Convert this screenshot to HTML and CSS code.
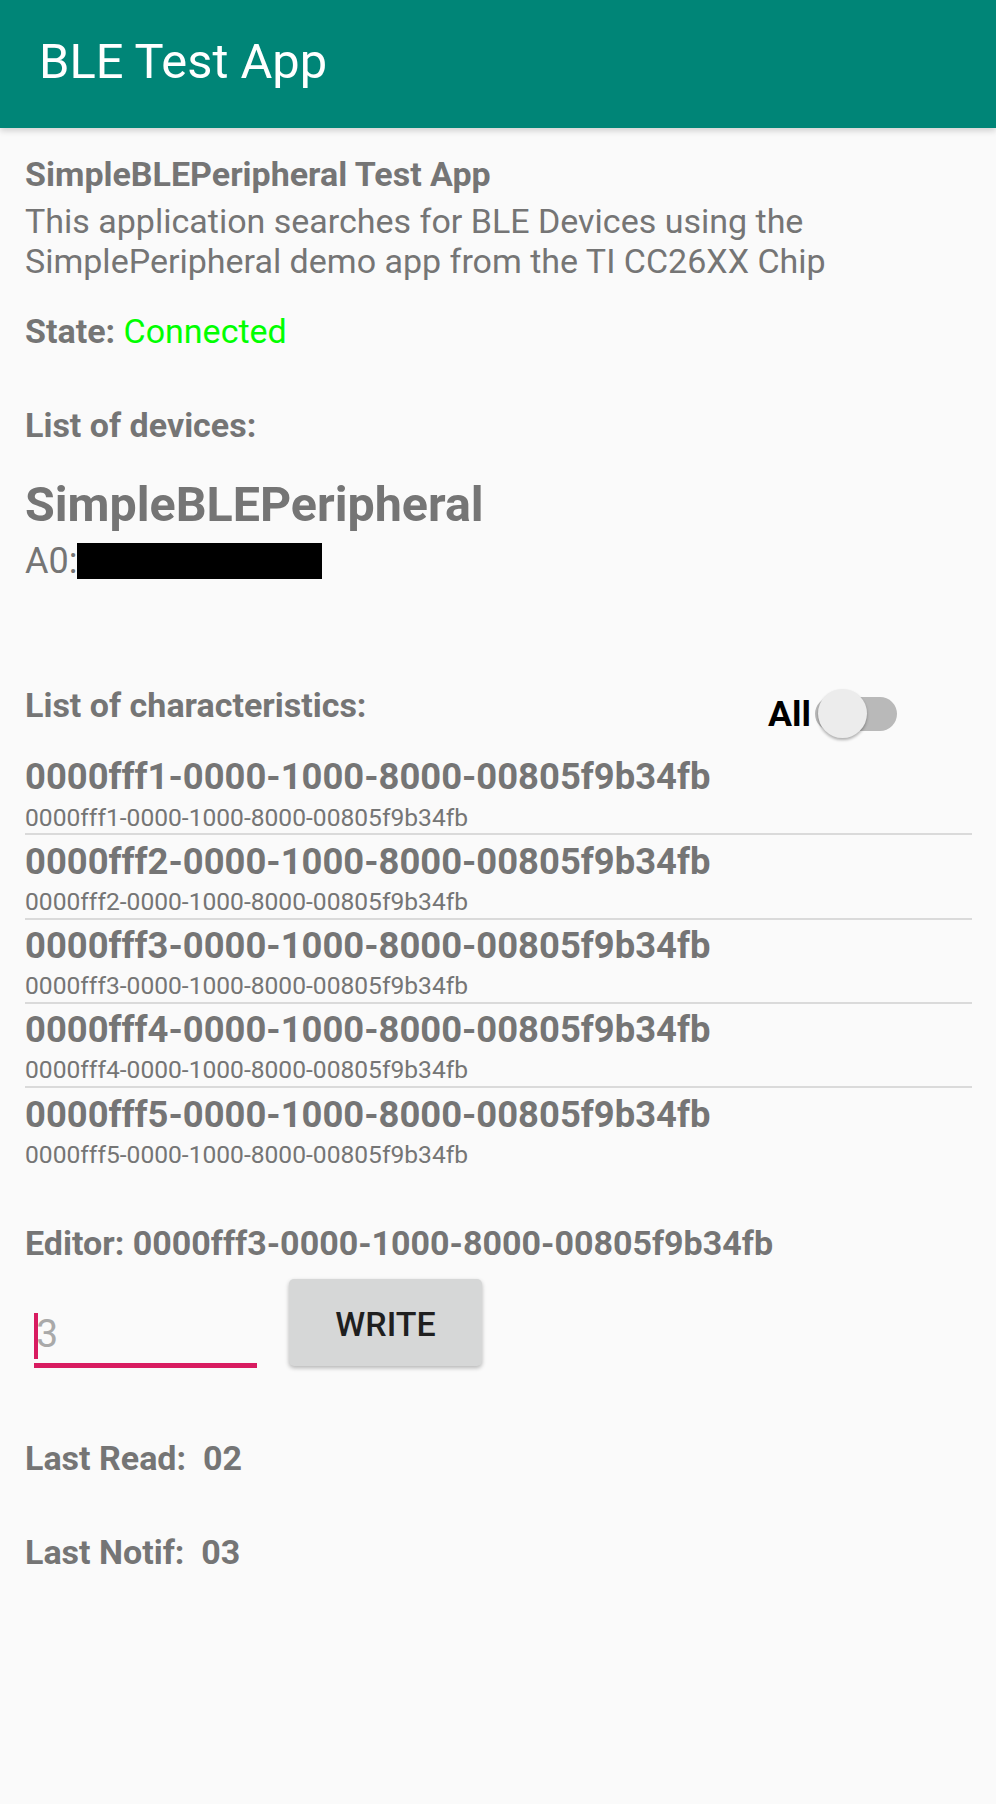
FILE: index.html
```html
<!DOCTYPE html>
<html>
<head>
<meta charset="utf-8">
<title>BLE Test App</title>
<link rel="stylesheet" href="styles.css">
</head>
<body>
<header class="toolbar"><span class="toolbar-title">BLE Test App</span></header>
<main class="content">
  <div class="heading">SimpleBLEPeripheral Test App</div>
  <div class="desc">This application searches for BLE Devices using the<br>SimplePeripheral demo app from the TI CC26XX Chip</div>
  <div class="state"><span class="state-key">State:</span> <span class="green">Connected</span></div>
  <div class="label devices-label">List of devices:</div>
  <div class="device-name">SimpleBLEPeripheral</div>
  <div class="device-addr"><span>A0:</span><span class="redact"></span></div>
  <div class="chars-header">
    <div class="label">List of characteristics:</div>
    <div class="toggle-group">
      <span class="toggle-label">All</span>
      <span class="switch"><span class="switch-track"></span><span class="switch-thumb"></span></span>
    </div>
  </div>
  <div class="char-list">
    <div class="char-row"><div class="char-name">0000fff1-0000-1000-8000-00805f9b34fb</div><div class="char-uuid">0000fff1-0000-1000-8000-00805f9b34fb</div></div>
    <div class="char-row"><div class="char-name">0000fff2-0000-1000-8000-00805f9b34fb</div><div class="char-uuid">0000fff2-0000-1000-8000-00805f9b34fb</div></div>
    <div class="char-row"><div class="char-name">0000fff3-0000-1000-8000-00805f9b34fb</div><div class="char-uuid">0000fff3-0000-1000-8000-00805f9b34fb</div></div>
    <div class="char-row"><div class="char-name">0000fff4-0000-1000-8000-00805f9b34fb</div><div class="char-uuid">0000fff4-0000-1000-8000-00805f9b34fb</div></div>
    <div class="char-row"><div class="char-name">0000fff5-0000-1000-8000-00805f9b34fb</div><div class="char-uuid">0000fff5-0000-1000-8000-00805f9b34fb</div></div>
  </div>
  <div class="label editor-label">Editor: 0000fff3-0000-1000-8000-00805f9b34fb</div>
  <div class="write-row">
    <div class="input"><span class="cursor"></span><span class="hint">3</span></div>
    <button class="write-btn">WRITE</button>
  </div>
  <div class="label last-read">Last Read:&nbsp; 02</div>
  <div class="label last-notif">Last Notif:&nbsp; 03</div>
</main>
</body>
</html>
```
FILE: styles.css
```css
* { box-sizing: border-box; }
html, body { margin: 0; padding: 0; }
body {
  background: #fafafa;
  font-family: Roboto, "Liberation Sans", sans-serif;
  color: #757575;
  width: 996px;
  min-height: 1804px;
}
.toolbar {
  height: 128px;
  background: #008577;
  padding-left: 39px;
  box-shadow: 0 3px 6px rgba(0,0,0,0.16);
  position: relative;
  z-index: 1;
}
.toolbar-title {
  display: block;
  color: #fff;
  font-size: 48.8px;
  line-height: 124px;
}
.content {
  padding: 26.4px 24px 0 25px;
}
.heading { font-weight: 700; font-size: 34px; line-height: 40px; }
.desc { font-size: 34px; line-height: 40px; margin-top: 7px; }
.state { font-size: 34px; line-height: 40px; margin-top: 30px; }
.state-key { font-weight: 700; }
.green { color: #00ff00; }
.label { font-weight: 700; font-size: 34px; line-height: 40px; }
.devices-label { margin-top: 54px; }
.device-name { font-weight: 700; font-size: 48.4px; line-height: 56px; margin-top: 32px; }
.device-addr { font-size: 36px; line-height: 48px; margin-top: 3.35px; }
.redact { display: inline-block; width: 245px; height: 36px; margin-left: -0.5px; background: #000; vertical-align: -6px; }
.chars-header { display: flex; justify-content: space-between; align-items: flex-start; margin-top: 100.6px; }
.toggle-group { display: flex; align-items: center; margin-right: 75px; margin-top: 4.1px; height: 49px; }
.toggle-label { font-weight: 700; font-size: 35.8px; color: #000; line-height: 40px; }
.switch { position: relative; width: 82px; height: 49px; margin-left: 4px; }
.switch-track { position: absolute; left: 0; top: 7.5px; width: 82px; height: 34px; border-radius: 17px; background: #b9b9b9; }
.switch-thumb { position: absolute; left: 2.5px; top: 0; width: 49px; height: 49px; border-radius: 50%; background: #ececec; box-shadow: 0 2px 3px rgba(0,0,0,0.3); }
.char-list { margin-top: 19.05px; }
.char-row { padding: 6.35px 0 0.9px; border-bottom: 2px solid #dadada; }
.char-row:first-child { padding-top: 0; }
.char-row:last-child { border-bottom: none; }
.char-name { font-weight: 700; font-size: 36.4px; line-height: 40px; }
.char-uuid { font-size: 24.6px; line-height: 30px; margin-top: 5.05px; }
.editor-label { margin-top: 52.67px; }
.write-row { display: flex; align-items: flex-start; margin-top: 15.63px; }
.input { position: relative; width: 223px; height: 89px; margin-left: 9px; border-bottom: 5px solid #d81b60; padding-left: 2.2px; padding-top: 31.7px; }
.cursor { position: absolute; left: 0; top: 34px; width: 4px; height: 46px; background: #d81b60; }
.hint { display: block; font-size: 39px; line-height: 46px; color: #a9a9a9; }
.write-btn {
  margin-left: 32px;
  width: 193px; height: 87px;
  border: none; border-radius: 5px;
  background: #d6d7d7;
  box-shadow: 0 2px 4px rgba(0,0,0,0.28);
  font-family: Roboto, "Liberation Sans", sans-serif;
  font-weight: 500; font-size: 34px; color: #1f1f1f;
  line-height: 83px;
  padding: 4px 0 0;
}
.last-read { margin-top: 70.37px; }
.last-notif { margin-top: 54px; }
```
